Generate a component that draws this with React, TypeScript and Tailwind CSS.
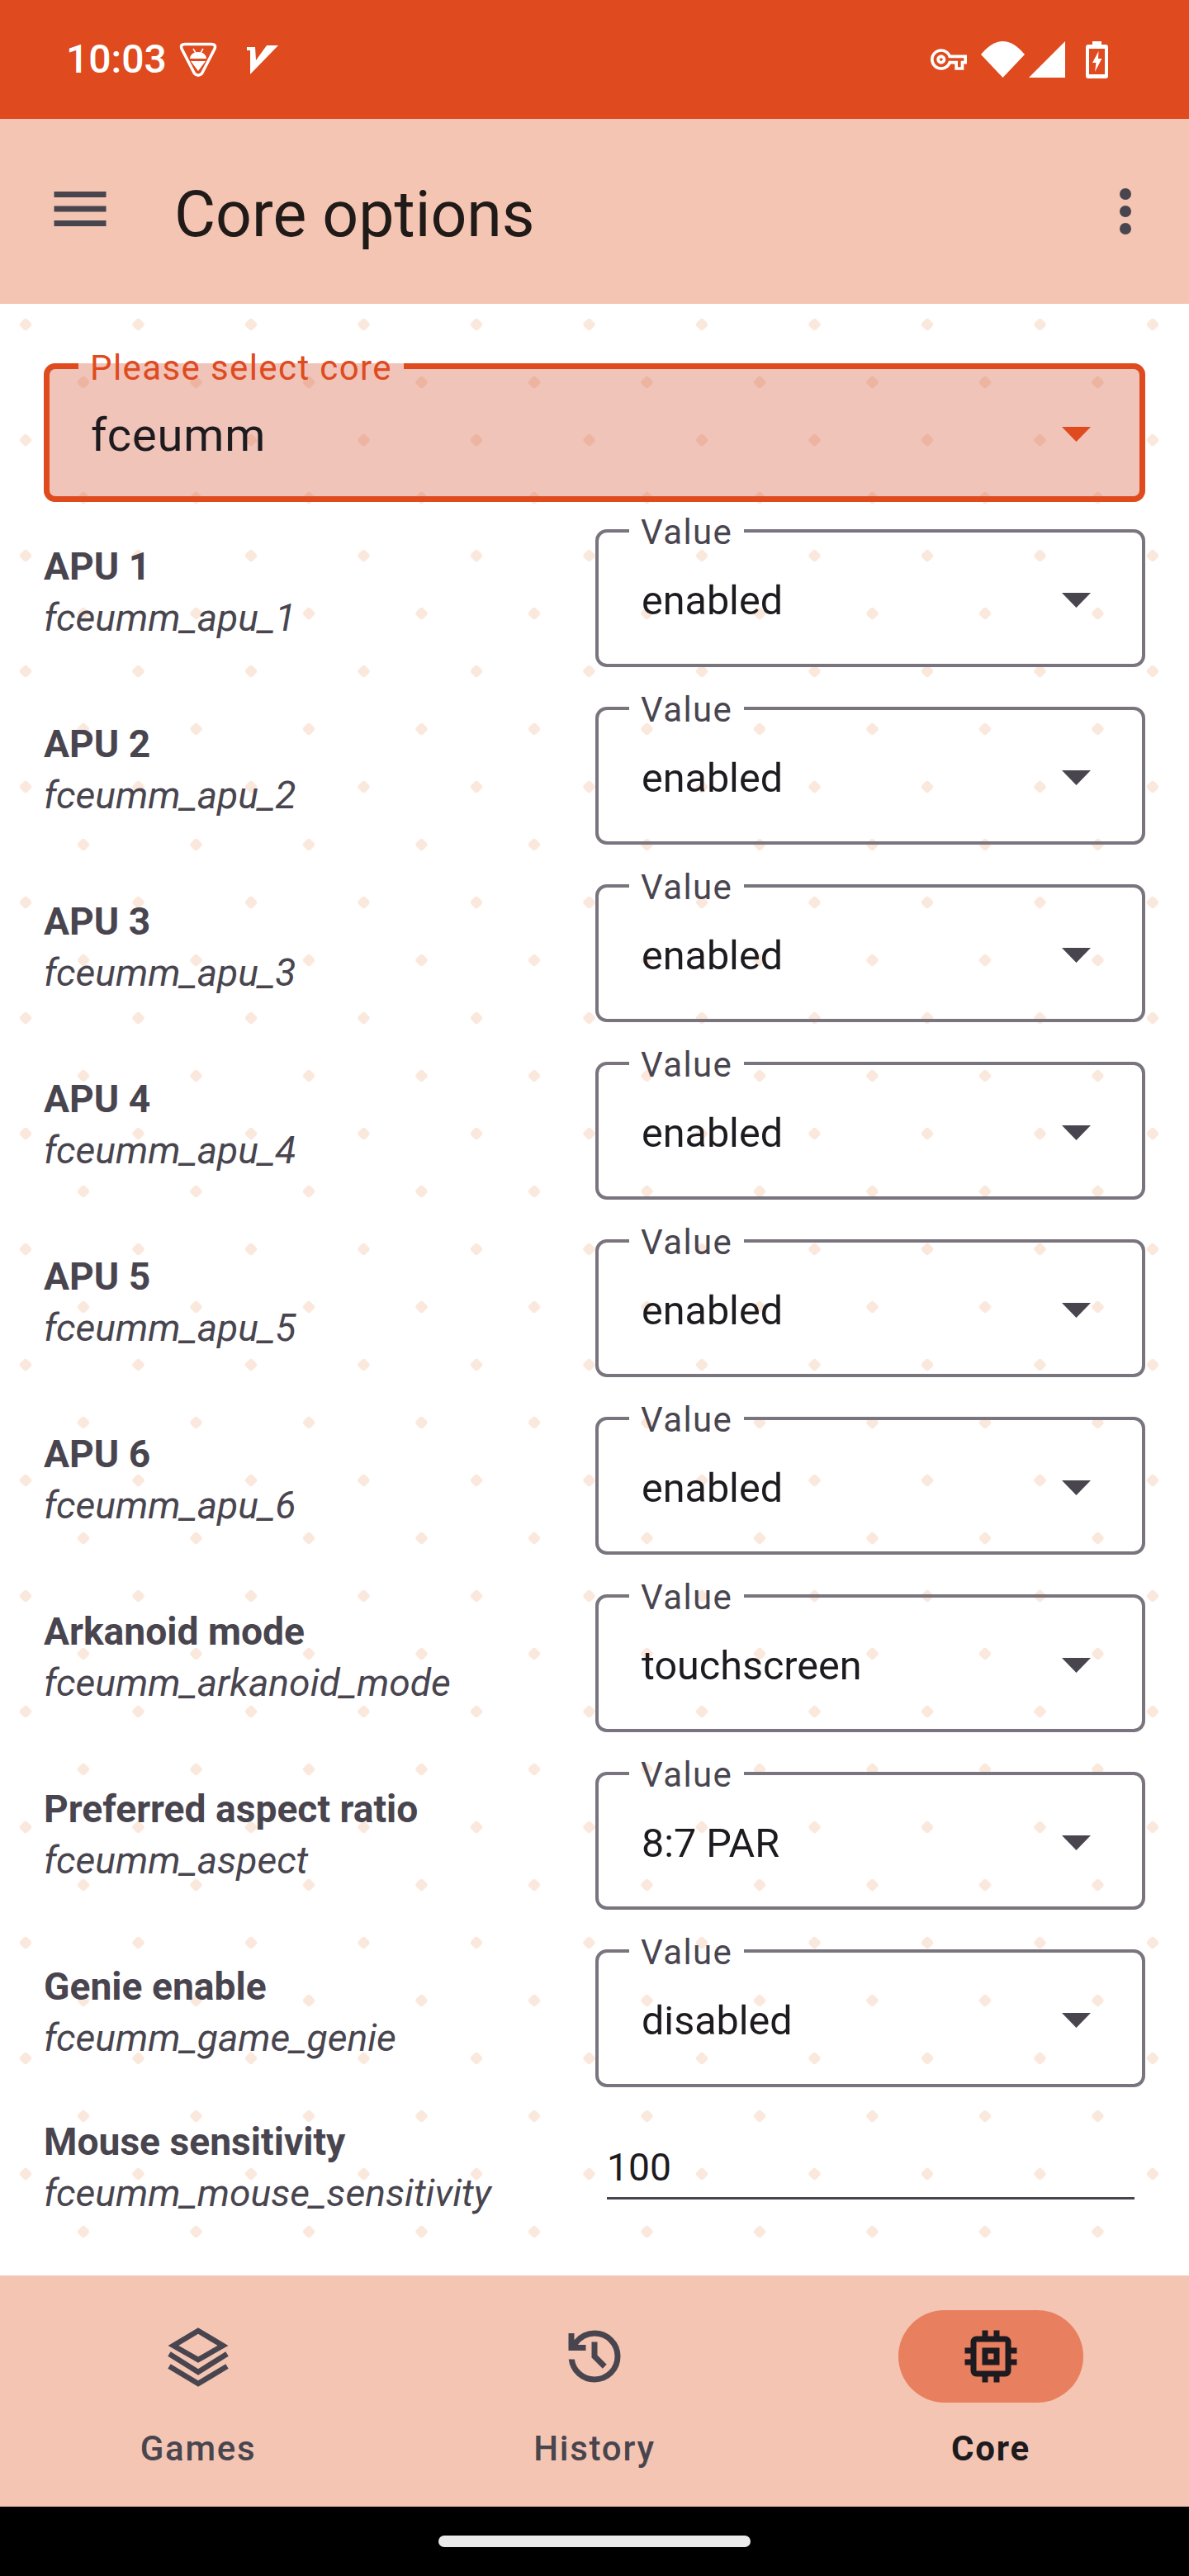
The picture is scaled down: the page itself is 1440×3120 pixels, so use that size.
const bodyFont = "font-['Roboto',sans-serif]";

const rows = [
  { title: "APU 1", name: "fceumm_apu_1", value: "enabled" },
  { title: "APU 2", name: "fceumm_apu_2", value: "enabled" },
  { title: "APU 3", name: "fceumm_apu_3", value: "enabled" },
  { title: "APU 4", name: "fceumm_apu_4", value: "enabled" },
  { title: "APU 5", name: "fceumm_apu_5", value: "enabled" },
  { title: "APU 6", name: "fceumm_apu_6", value: "enabled" },
  { title: "Arkanoid mode", name: "fceumm_arkanoid_mode", value: "touchscreen" },
  { title: "Preferred aspect ratio", name: "fceumm_aspect", value: "8:7 PAR" },
  { title: "Genie enable", name: "fceumm_game_genie", value: "disabled" },
];

const StatusBar = () => (
  <div className="flex h-[144px] items-center justify-between bg-[#df4a1e] pl-[80px] pr-[98px] text-white">
    <div className="flex items-center">
      <span className="w-[137px] text-[48px] leading-none font-medium">10:03</span>
      <svg width="46" height="43" viewBox="0 0 46 43" fill="white">
        <path d="M7 2.5H39Q45 2.5 43 8L27.5 38Q23 42.5 18.5 38L3 8Q1 2.5 7 2.5Z" fill="none" stroke="white" strokeWidth="3.5" />
        <path d="M13 20Q14 12 23 12Q32 12 33 20ZM14 23H32L23 35Z" />
        <path d="M17 8l3 5M29 8l-3 5" stroke="white" strokeWidth="1.5" />
      </svg>
      <svg className="ml-[36px]" width="38" height="35" viewBox="0 0 38 35" fill="white">
        <path d="M0 2H10L11 18L24 0H38L4 35L4 6H0Z" />
      </svg>
    </div>
    <div className="flex items-center">
      <svg width="44" height="26" viewBox="0 5 24 14" fill="white">
        <path d="M22 19h-6v-4h-2.68c-1.14 2.42-3.6 4-6.32 4-3.86 0-7-3.14-7-7s3.14-7 7-7c2.72 0 5.17 1.58 6.32 4H24v6h-2v4zm-4-2h2v-4h2v-2H11.94l-.23-.67C11.01 8.34 9.11 7 7 7c-2.76 0-5 2.24-5 5s2.24 5 5 5c2.11 0 4.01-1.34 4.71-3.33l.23-.67H18v4zM7 15c-1.65 0-3-1.35-3-3s1.35-3 3-3 3 1.35 3 3-1.35 3-3 3zm0-4c-.55 0-1 .45-1 1s.45 1 1 1 1-.45 1-1-.45-1-1-1z" />
      </svg>
      <svg className="ml-[17px]" width="53" height="44" viewBox="0 0 53 44" fill="white">
        <path d="M0 16Q26.5 -16 53 16L26.5 44Z" />
      </svg>
      <svg className="ml-[5px]" width="44" height="44" viewBox="0 0 44 44" fill="white">
        <path d="M44 0V44H0Z" />
      </svg>
      <svg className="ml-[25px]" width="27" height="45" viewBox="0 0 27 45">
        <path fillRule="evenodd" fill="white" d="M8 0H19V4H24Q27 4 27 7V42Q27 45 24 45H3Q0 45 0 42V7Q0 4 3 4H8ZM4 9V40H23V9Z" />
        <path fill="white" d="M15.5 12L8 26H12.5L11 37L19.5 21H15Z" />
      </svg>
    </div>
  </div>
);

const AppBar = () => (
  <div className="flex h-[224px] items-center bg-[#f4c5b2]">
    <svg className="mb-[6px] ml-[55px] shrink-0" width="84" height="84" viewBox="0 0 24 24" fill="#49454f">
      <path d="M3 18h18v-2H3v2zm0-5h18v-2H3v2zm0-7v2h18V6H3z" />
    </svg>
    <h1 className="ml-[72px] flex-1 pt-[8px] text-[77px] leading-none font-normal text-[#201a18]">Core options</h1>
    <svg className="mr-[35px] shrink-0" width="84" height="84" viewBox="0 0 84 84" fill="#49454f">
      <circle cx="42" cy="21" r="7" />
      <circle cx="42" cy="42" r="7" />
      <circle cx="42" cy="63" r="7" />
    </svg>
  </div>
);

const CoreSelect = () => (
  <fieldset className="relative h-[188px] rounded-[14px] border-[7px] border-[#df4a1e] bg-[#cf411e]/[0.31]">
    <legend className="ml-[35px] px-[14px] pt-[5px] text-[42px] leading-[42px] tracking-[1.4px] text-[#df4a1e]">Please select core</legend>
    <div className="pl-[50px] pt-[20px] text-[56px] leading-[80px] tracking-[0.9px] text-[#1d1b20]">fceumm</div>
    <svg className="absolute right-[59px] top-[50px]" width="35" height="18" viewBox="0 0 35 18" fill="#df4a1e">
      <path d="M0 0H35L17.5 18Z" />
    </svg>
  </fieldset>
);

const ValueSelect = ({ value }: { value: string }) => (
  <fieldset className="relative h-[188px] w-[666px] shrink-0 rounded-[14px] border-[4px] border-[#79747e]">
    <legend className="ml-[37px] px-[14px] pt-[4px] text-[42px] leading-[42px] tracking-[1.4px] text-[#49454f]">Value</legend>
    <div className="pl-[52px] pt-[22px] text-[48.5px] leading-[80px] text-[#1d1b20]">{value}</div>
    <svg className="absolute right-[62px] top-[52px]" width="35" height="18" viewBox="0 0 35 18" fill="#49454f">
      <path d="M0 0H35L17.5 18Z" />
    </svg>
  </fieldset>
);

const RowLabel = ({ title, name }: { title: string; name: string }) => (
  <div className="flex flex-col text-[#49454f]">
    <span className="text-[46.2px] leading-[62px] font-bold">{title}</span>
    <span className="text-[46.2px] leading-[62px] italic">{name}</span>
  </div>
);

const DotPattern = () => (
  <svg className="absolute inset-0 h-full w-full" aria-hidden="true">
    <defs>
      <pattern id="dots" width="136.5" height="140" patternUnits="userSpaceOnUse">
        <rect x="25" y="19" width="12" height="12" rx="3.5" transform="rotate(45 31 25)" fill="#fbe8dc" />
        <rect x="95" y="89" width="12" height="12" rx="3.5" transform="rotate(45 101 95)" fill="#fbe8dc" />
      </pattern>
    </defs>
    <rect width="100%" height="100%" fill="url(#dots)" />
  </svg>
);

const NavItem = ({ label, active, children }: { label: string; active?: boolean; children: React.ReactNode }) => (
  <div className="flex flex-1 flex-col items-center pt-[42px]">
    <div className={`flex h-[112px] w-[224px] items-center justify-center rounded-full ${active ? "bg-[#e87f5e]" : ""}`}>
      {children}
    </div>
    <span className={`mt-[28px] text-[42px] leading-[56px] tracking-[1.75px] ${active ? "font-bold text-[#1d1b20]" : "font-medium text-[#49454f]"}`}>
      {label}
    </span>
  </div>
);

const BottomNav = () => (
  <div className="flex h-[280px] bg-[#f4c5b2]">
    <NavItem label="Games">
      <svg width="84" height="84" viewBox="0 0 84 84" fill="none" stroke="#49454f" strokeWidth="6.5">
        <path d="M42 11L72 29L42 46L12 29Z" />
        <path d="M7 39L42 61L77 39" />
        <path d="M7 54L42 75L77 54" />
      </svg>
    </NavItem>
    <NavItem label="History">
      <svg width="84" height="84" viewBox="0 0 24 24" fill="#49454f">
        <path d="M12 21q-3.45 0-6.012-2.287T3.05 13H5.1q.35 2.6 2.313 4.3T12 19q2.925 0 4.963-2.037T19 12q0-2.925-2.037-4.962T12 5q-1.725 0-3.225.8T6.25 8H9v2H3V4h2v2.35q1.275-1.6 3.113-2.475T12 3q3.75 0 6.375 2.625T21 12q0 3.75-2.625 6.375T12 21m2.8-4.8L11 12.4V7h2v4.6l3.2 3.2z" />
      </svg>
    </NavItem>
    <NavItem label="Core" active>
      <svg width="84" height="84" viewBox="0 0 24 24" fill="#1d1b20">
        <path d="M9 15V9h6v6zm2-2h2v-2h-2zm-2 8v-2H7q-.825 0-1.412-.587T5 17v-2H3v-2h2v-2H3V9h2V7q0-.825.588-1.412T7 5h2V3h2v2h2V3h2v2h2q.825 0 1.413.588T19 7v2h2v2h-2v2h2v2h-2v2q0 .825-.587 1.413T17 19h-2v2h-2v-2h-2v2zm8-4V7H7v10z" />
      </svg>
    </NavItem>
  </div>
);

export default function App() {
  return (
    <div className={`flex h-[3120px] w-[1440px] flex-col bg-white ${bodyFont}`}>
      <StatusBar />
      <AppBar />
      <main className="relative flex-1 overflow-hidden">
        <DotPattern />
        <div className="relative flex flex-col px-[53px] pt-[52px]">
          <CoreSelect />
          <div className="flex flex-col">
            {rows.map((row) => (
              <div key={row.title} className="flex h-[215px] items-end pb-[14px] first:h-[214px]">
                <div className="mb-[29px] flex-1">
                  <RowLabel title={row.title} name={row.name} />
                </div>
                <ValueSelect value={row.value} />
              </div>
            ))}
            <div className="flex items-start pt-[21px]">
              <div className="flex-1">
                <RowLabel title="Mouse sensitivity" name="fceumm_mouse_sensitivity" />
              </div>
              <div className="ml-[14px] mr-[13px] mt-[32px] w-[639px] shrink-0 border-b-[3px] border-[#49454f] pb-[6px] text-[46.2px] leading-[60px] text-[#1d1b20]">100</div>
            </div>
          </div>
        </div>
      </main>
      <BottomNav />
      <div className="flex h-[84px] items-center justify-center bg-black">
        <div className="h-[14px] w-[378px] rounded-full bg-[#ebebeb]" />
      </div>
    </div>
  );
}
